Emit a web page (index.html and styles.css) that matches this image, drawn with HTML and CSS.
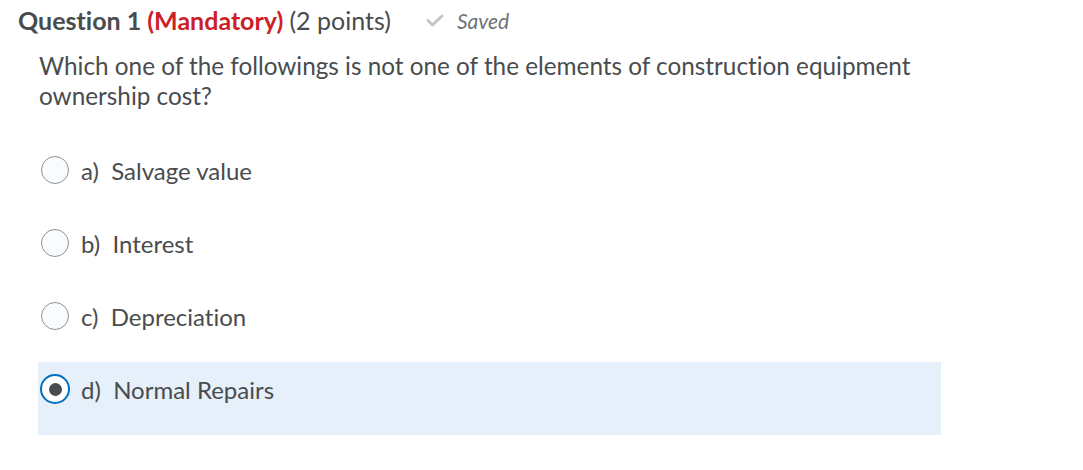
FILE: index.html
```html
<!DOCTYPE html>
<html>
<head>
<meta charset="utf-8">
<link rel="stylesheet" href="styles.css">
</head>
<body>
<div class="question">
  <div class="q-header">
    <h2 class="q-title">Question 1 <span class="mandatory">(Mandatory)</span> <span class="points">(2 points)</span></h2>
    <span class="saved">
      <svg class="check" width="18" height="13" viewBox="0 0 18 13"><path d="M2 6.5 L6.5 11 L16 2" fill="none" stroke="#bfc4c7" stroke-width="2.8" stroke-linecap="round" stroke-linejoin="round"/></svg>
      <span class="saved-text">Saved</span>
    </span>
  </div>
  <div class="q-body">
    <p class="q-text">Which one of the followings is not one of the elements of construction equipment ownership cost?</p>
    <div class="options">
      <label class="option"><span class="radio"></span><span class="opt-text">a)&nbsp; Salvage value</span></label>
      <label class="option"><span class="radio"></span><span class="opt-text">b)&nbsp; Interest</span></label>
      <label class="option"><span class="radio"></span><span class="opt-text">c)&nbsp; Depreciation</span></label>
      <label class="option selected"><span class="radio checked"></span><span class="opt-text">d)&nbsp; Normal Repairs</span></label>
    </div>
  </div>
</div>
</body>
</html>
```
FILE: styles.css
```css
html, body {
  margin: 0;
  padding: 0;
  background: #ffffff;
}
body {
  font-family: Lato, "Open Sans", sans-serif;
  color: #494c4e;
  font-variant-ligatures: none;
  font-feature-settings: "liga" 0, "clig" 0;
}
.question {
  padding: 5px 0 0 18px;
}
.q-header {
  display: flex;
  align-items: center;
  gap: 35px;
  height: 30px;
}
.q-title {
  margin: 0;
  font-size: 25px;
  font-weight: 700;
  color: #494c4e;
  letter-spacing: 0;
}
.mandatory {
  color: #cd2026;
}
.points {
  font-weight: 400;
}
.saved {
  display: flex;
  align-items: center;
  gap: 13px;
  padding-top: 1px;
}
.check {
  display: block;
}
.saved-text {
  font-style: italic;
  font-size: 21px;
  color: #6e7376;
}
.q-body {
  padding: 16px 0 0 21px;
}
.q-text {
  margin: 0;
  font-size: 24.3px;
  line-height: 30px;
  width: 900px;
}
.options {
  margin-top: 32px;
  margin-left: -1px;
  width: 903px;
}
.option {
  display: flex;
  align-items: center;
  gap: 12px;
  height: 73px;
  box-sizing: border-box;
  padding: 12px 0 31px 3px;
}
.option.selected {
  background: #e6f0fa;
}
.radio {
  width: 28px;
  height: 28px;
  box-sizing: border-box;
  border-radius: 50%;
  border: 1px solid #8e9295;
  background: #f9fbff;
  flex: none;
  display: flex;
  align-items: center;
  justify-content: center;
}
.radio.checked {
  border: 2px solid #006fbf;
  background: #ffffff;
  width: 30px;
  height: 30px;
  margin-left: -1px;
  margin-right: -1px;
}
.radio.checked::after {
  content: "";
  width: 13px;
  height: 13px;
  border-radius: 50%;
  background: #494c4e;
}
.opt-text {
  font-size: 24px;
}
```
